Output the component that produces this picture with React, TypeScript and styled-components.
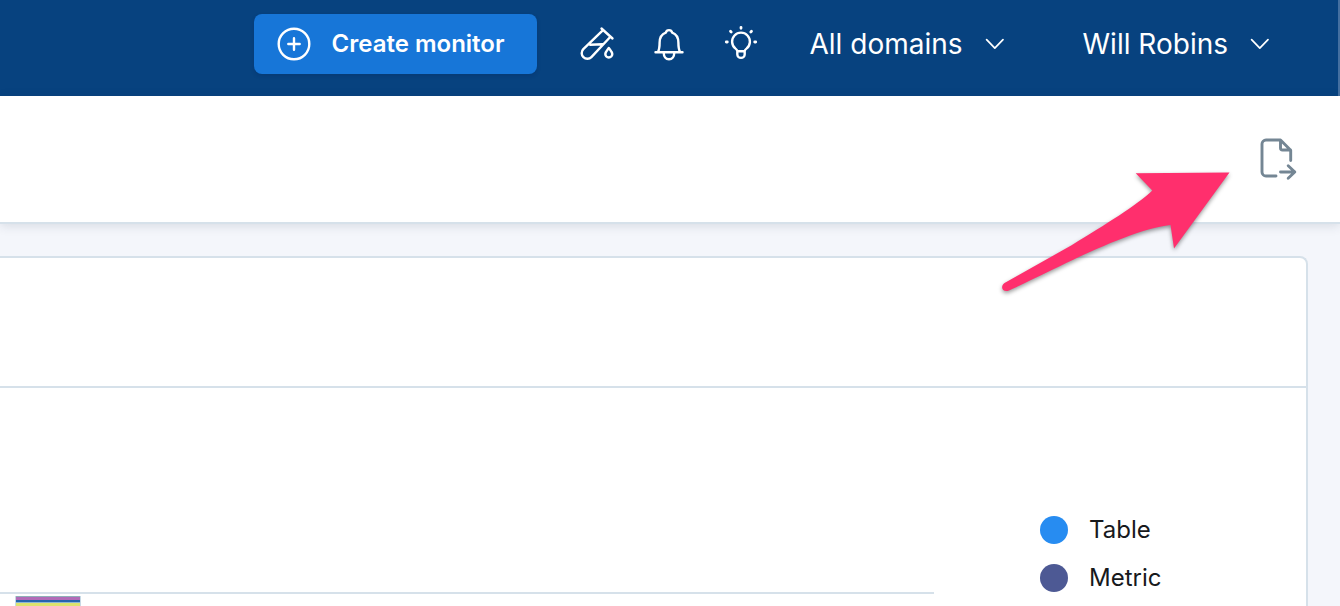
import React from 'react';
import styled, { createGlobalStyle } from 'styled-components';

const GlobalStyle = createGlobalStyle`
  *, *::before, *::after { box-sizing: border-box; }
  body {
    margin: 0;
    background: #f4f6fb;
    color: #17191c;
    font-family: Inter, "Liberation Sans", sans-serif;
  }
  button { font-family: inherit; cursor: pointer; }
`;

const Page = styled.div`
  position: relative;
  display: flex;
  flex-direction: column;
  min-height: 100vh;
  overflow: hidden;
`;

const TopBar = styled.header`
  display: flex;
  align-items: center;
  justify-content: flex-end;
  padding: 14px 66px 22px 16px;
  border-right: 2px solid #446fa0;
  background: #07427f;
`;

const CreateButton = styled.button`
  display: flex;
  align-items: center;
  gap: 20px;
  height: 60px;
  padding: 0 33px 0 22px;
  border: 0;
  border-radius: 8px;
  background: #1776d8;
  box-shadow: 0 2px 4px rgba(0, 20, 60, 0.16);
  color: #fff;
  font-size: 24px;
  font-weight: 600;
  line-height: 32px;
  white-space: nowrap;
`;

const IconGroup = styled.nav`
  display: flex;
  gap: 32px;
  margin: 0 48px 0 40px;
`;

const IconButton = styled.button<{ $color?: string }>`
  display: flex;
  padding: 0;
  border: 0;
  background: none;
  color: ${({ $color }) => $color ?? '#fff'};
`;

const MenuGroup = styled.div`
  display: flex;
  gap: 76px;
`;

const MenuButton = styled.button`
  display: flex;
  align-items: center;
  gap: 20px;
  padding: 0;
  border: 0;
  background: none;
  color: #fff;
  font-size: 28px;
  line-height: 36px;
  white-space: nowrap;
`;

const Toolbar = styled.div`
  position: relative;
  display: flex;
  align-items: center;
  justify-content: flex-end;
  height: 128px;
  padding: 0 41px;
  border-bottom: 2px solid #d6e1ea;
  background: #fff;
  box-shadow: 0 2px 10px rgba(30, 45, 70, 0.13);
`;

const Content = styled.main`
  display: flex;
  flex: 1;
  padding: 32px 32px 0 0;
`;

const Card = styled.section`
  flex: 1;
  border: 2px solid #d6e1ea;
  border-width: 2px 2px 0 0;
  border-top-right-radius: 8px;
  background: #fff;
`;

const CardHeader = styled.div`
  height: 130px;
  border-bottom: 2px solid #d6e1ea;
`;

const CardBody = styled.div`
  display: flex;
  gap: 106px;
`;

const Chart = styled.div`
  flex: 1;
  padding-top: 204px;
`;

const GridLine = styled.div`
  height: 2px;
  background: #d6e1ea;
`;

const Bar = styled.svg`
  display: block;
  margin: 2px 0 0 15px;
`;

const Legend = styled.ul`
  display: flex;
  flex-direction: column;
  gap: 20px;
  width: 266px;
  margin: 0;
  padding: 128px 0 0;
  list-style: none;
`;

const LegendItem = styled.li`
  display: flex;
  align-items: center;
  gap: 21px;
  font-size: 24px;
  line-height: 28px;
`;

const Dot = styled.span<{ $color: string }>`
  width: 28px;
  height: 28px;
  border-radius: 50%;
  background: ${({ $color }) => $color};
`;

const Arrow = styled.svg`
  position: absolute;
  top: 160px;
  right: 100px;
  pointer-events: none;
  filter: drop-shadow(0 2px 2px rgba(0, 0, 0, 0.4));
`;

const stroke = {
  fill: 'none',
  stroke: 'currentColor',
  strokeLinecap: 'round' as const,
  strokeLinejoin: 'round' as const,
};

const PlusCircle = () => (
  <svg width="36" height="36" viewBox="0 0 36 36" {...stroke} strokeWidth="2.4" aria-hidden="true">
    <circle cx="18" cy="18" r="15.3" />
    <path d="M18 12.3v11.4M12.3 18h11.4" />
  </svg>
);

const TestTube = () => (
  <svg width="40" height="40" viewBox="0 0 40 40" {...stroke} strokeWidth="2.4" aria-hidden="true">
    <path d="M24.5 4.5 35.5 14.5M26 6.2 6.3 25.2a5.6 5.6 0 0 0 8.1 7.9L33.2 13M13 20.8l12.500-.6" />
    <path d="M31.8 24c-1.5 2-3.5 4-3.5 6a3.5 3.5 0 0 0 7 0c0-2-2-4-3.5-6Z" />
  </svg>
);

const Bell = () => (
  <svg width="40" height="40" viewBox="0 0 40 40" {...stroke} strokeWidth="2.4" aria-hidden="true">
    <path d="M6.5 28.2h27M9 28c1.2-2.3 1.6-5 1.6-9.2 0-5.2 2.3-8.8 6.2-10.2a3.3 3.3 0 0 1 6.4 0c3.9 1.4 6.2 5 6.2 10.2 0 4.2.4 6.9 1.6 9.2" />
    <path d="M14.7 28.5c0 4.2 2.2 6.7 5.3 6.7s5.3-2.5 5.3-6.7" />
  </svg>
);

const Bulb = () => (
  <svg width="40" height="40" viewBox="0 0 40 40" {...stroke} strokeWidth="2.4" aria-hidden="true">
    <path d="M16.3 27.3c0-1.2-.8-2-2-2.9a8.9 8.9 0 1 1 11.4 0c-1.2.9-2 1.7-2 2.9ZM16.3 27.5v2.7a3.7 3.7 0 0 0 7.4 0v-2.7" />
    <path strokeWidth="2.8" d="M20 7.300v1M9.500 11.200l.7.700M30.500 11.200l-.7.700M5.300 22h1M33.700 22h1" transform="translate(0 -4)" />
  </svg>
);

const ChevronDown = () => (
  <svg width="24" height="24" viewBox="0 0 24 24" {...stroke} strokeWidth="1.7" aria-hidden="true">
    <path d="m3.6 7.6 8.2 8.6 8.200-8.600" />
  </svg>
);

const ExportFile = () => (
  <svg width="44" height="48" viewBox="0 1 44 48" {...stroke} strokeWidth="2.9" aria-hidden="true">
    <path d="M21 42H11a4 4 0 0 1-4-4V10a4 4 0 0 1 4-4h14.500L35.700 16.200v10.300M25.500 6.200V14a2 2 0 0 0 2 2h8" />
    <path d="M25.500 38H39.800M33.200 31.700l6.600 6.300-6.600 6.200" />
  </svg>
);

const series = [
  { name: 'Table', color: '#278cf1' },
  { name: 'Metric', color: '#4d5994' },
];

export default function App() {
  return (
    <Page>
      <GlobalStyle />
      <TopBar>
        <CreateButton type="button">
          <PlusCircle />
          Create monitor
        </CreateButton>
        <IconGroup aria-label="Tools">
          <IconButton type="button" aria-label="Experiments"><TestTube /></IconButton>
          <IconButton type="button" aria-label="Notifications"><Bell /></IconButton>
          <IconButton type="button" aria-label="Tips"><Bulb /></IconButton>
        </IconGroup>
        <MenuGroup>
          <MenuButton type="button" aria-haspopup="menu">All domains<ChevronDown /></MenuButton>
          <MenuButton type="button" aria-haspopup="menu">Will Robins<ChevronDown /></MenuButton>
        </MenuGroup>
      </TopBar>
      <Toolbar>
        <IconButton type="button" aria-label="Export" $color="#748694"><ExportFile /></IconButton>
      </Toolbar>
      <Content>
        <Card>
          <CardHeader />
          <CardBody>
            <Chart>
              <GridLine />
              <Bar width="66" height="10" viewBox="0 0 66 10" role="img" aria-label="Monitor count">
                <path fill="#c8d9e5" d="M0 0h66v10H0z" />
                <path fill="#8fb0b8" d="M1 0h64v1H1z" />
                <path fill="#b26cb8" d="M1 1h64v3H1z" />
                <path fill="#2464ae" d="M1 4h64v2H1z" />
                <path fill="#8cb6d6" d="M1 6h64v1H1z" />
                <path fill="#dce36e" d="M1 7h64v3H1z" />
              </Bar>
            </Chart>
            <Legend>
              {series.map(({ name, color }) => (
                <LegendItem key={name}>
                  <Dot $color={color} />
                  {name}
                </LegendItem>
              ))}
            </Legend>
          </CardBody>
        </Card>
      </Content>
      <Arrow width="250" height="150" viewBox="0 0 250 150" aria-hidden="true">
        <path
          fill="#ff2f6d"
          d="M239.500 12.500 145.700 13.300 162.300 30.500C146 46 116 64 82 85L14.500 123C9.500 127 13 133 19 130.500C60 112 136 70 180.500 65L184 88.500Z"
        />
      </Arrow>
    </Page>
  );
}
